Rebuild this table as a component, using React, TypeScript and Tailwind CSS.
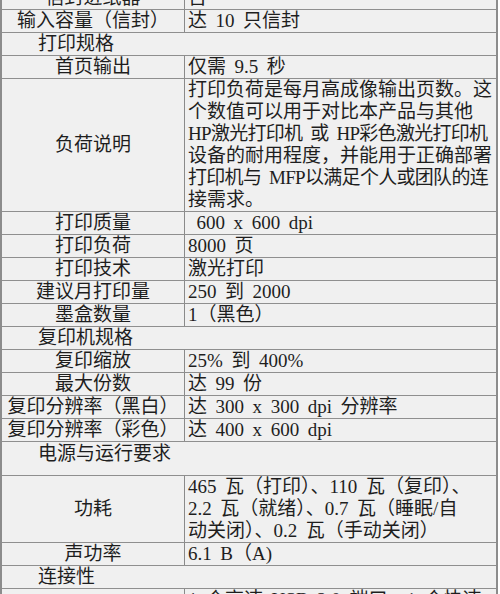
import React from 'react';

type Row =
  | { kind: 'section'; title: string; tall?: boolean }
  | { kind: 'item'; label: string; lines: string[] };

const rows: Row[] = [
  { kind: 'item', label: '信封进纸器', lines: ['否'] },
  { kind: 'item', label: '输入容量（信封）', lines: ['达 10 只信封'] },
  { kind: 'section', title: '打印规格' },
  { kind: 'item', label: '首页输出', lines: ['仅需 9.5 秒'] },
  {
    kind: 'item',
    label: '负荷说明',
    lines: [
      '打印负荷是每月高成像输出页数。这',
      '个数值可以用于对比本产品与其他',
      'HP激光打印机 或 HP彩色激光打印机',
      '设备的耐用程度，并能用于正确部署',
      '打印机与 MFP以满足个人或团队的连',
      '接需求。',
    ],
  },
  { kind: 'item', label: '打印质量', lines: ['\u00a0600 x 600 dpi'] },
  { kind: 'item', label: '打印负荷', lines: ['8000 页'] },
  { kind: 'item', label: '打印技术', lines: ['激光打印'] },
  { kind: 'item', label: '建议月打印量', lines: ['250 到 2000'] },
  { kind: 'item', label: '墨盒数量', lines: ['1（黑色）'] },
  { kind: 'section', title: '复印机规格' },
  { kind: 'item', label: '复印缩放', lines: ['25% 到 400%'] },
  { kind: 'item', label: '最大份数', lines: ['达 99 份'] },
  { kind: 'item', label: '复印分辨率（黑白）', lines: ['达 300 x 300 dpi 分辨率'] },
  { kind: 'item', label: '复印分辨率（彩色）', lines: ['达 400 x 600 dpi'] },
  { kind: 'section', title: '电源与运行要求', tall: true },
  {
    kind: 'item',
    label: '功耗',
    lines: [
      '465 瓦（打印）、110 瓦（复印）、',
      '2.2 瓦（就绪）、0.7 瓦（睡眠/自',
      '动关闭）、0.2 瓦（手动关闭）',
    ],
  },
  { kind: 'item', label: '声功率', lines: ['6.1 B（A)'] },
  { kind: 'section', title: '连接性' },
  {
    kind: 'item',
    label: '接口',
    lines: [
      '1 个高速 USB 2.0 端口，1 个快速',
      '以太网 10/100Base-TX 网络端口，',
      '1 个 RJ-11 传真端口',
    ],
  },
];

export default function App() {
  return (
    <div className="h-[594px] w-[500px] overflow-hidden bg-white">
      <div className="-mt-[13px] w-[498px] border-x-2 border-[#8c8c8c] bg-[#f0f0f0] font-['Liberation_Serif','Noto_Sans_CJK_SC',serif] text-[19px] leading-[22px] text-[#1e1e1e] [word-spacing:0.2em]">
        {rows.map((row, i) =>
          row.kind === 'section' ? (
            <div
              key={i}
              className={`border-b border-[#8f8f8f] pl-[36px] ${row.tall ? 'pb-[10px] pt-px' : 'py-0'}`}
            >
              {row.title}
            </div>
          ) : (
            <div key={i} className="grid grid-cols-[183px_1fr] border-b border-[#8f8f8f]">
              <div className="flex items-center justify-center border-r border-[#8a8a8a] text-center">
                {row.label}
              </div>
              <div className="overflow-hidden whitespace-nowrap pl-[3px]">
                {row.lines.map((l, j) => (
                  <div key={j} className={/HP|MFP/.test(l) ? 'tracking-[-0.7px]' : ''}>
                    {l}
                  </div>
                ))}
              </div>
            </div>
          )
        )}
      </div>
    </div>
  );
}
